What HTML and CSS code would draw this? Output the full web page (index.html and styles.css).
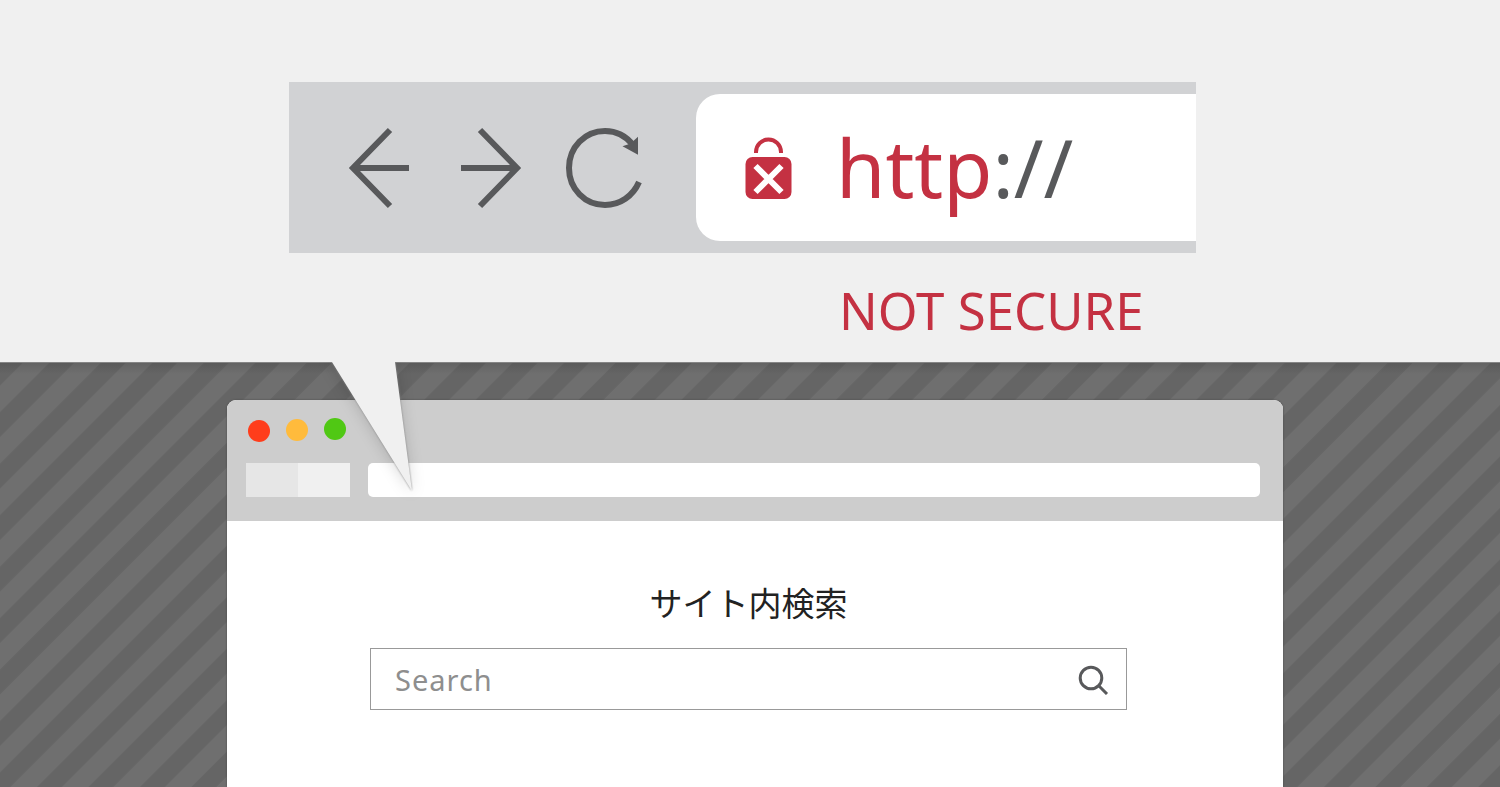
FILE: index.html
```html
<!DOCTYPE html>
<html lang="ja">
<head>
<meta charset="utf-8">
<meta name="viewport" content="width=device-width, initial-scale=1">
<title>サイト内検索</title>
<link rel="stylesheet" href="styles.css">
</head>
<body>
<header class="notice">
  <div class="closeup">
    <nav class="closeup-nav" aria-label="Browser">
      <button class="nav-button" type="button" aria-label="Back">
        <svg width="62" height="82" viewBox="0 0 62 82"><path d="M42 3 5 41l37 38M5 41h56"/></svg>
      </button>
      <button class="nav-button" type="button" aria-label="Forward">
        <svg width="62" height="82" viewBox="0 0 62 82"><path d="M20 3l37 38-37 38M57 41H1"/></svg>
      </button>
      <button class="nav-button" type="button" aria-label="Reload">
        <svg width="78" height="82" viewBox="0 0 78 82"><path d="M69 18C62 9 52 4 41 4 21 4 5 20 5 41s16 37 36 37c15 0 28-9 34-23"/><path class="tip" d="M73 12v14L61 19.500l6-2z"/></svg>
      </button>
    </nav>
    <div class="address">
      <svg class="lock" width="48" height="64" viewBox="0 0 48 64" aria-hidden="true">
        <path class="shackle" d="M12 17v-1a12.500 12.500 0 0 1 25 0v1"/>
        <rect class="lock-body" x="1.500" y="21" width="46" height="42" rx="7"/>
        <path class="cross" d="M11.500 30l26 26M37.500 30l-26 26"/>
      </svg>
      <span class="scheme">http<span class="slashes">://</span></span>
    </div>
  </div>
  <div class="warning-row"><p class="warning">NOT SECURE</p></div>
</header>
<main class="stage">
  <svg class="stripes" aria-hidden="true">
    <defs>
      <pattern id="stripe" width="36.400" height="36.400" patternUnits="userSpaceOnUse" patternTransform="rotate(45)">
        <rect x="16.600" width="18.900" height="36.400" fill="#6f6f6f"/>
      </pattern>
    </defs>
    <rect width="100%" height="100%" fill="url(#stripe)"/>
  </svg>
  <section class="window">
    <div class="chrome">
      <svg class="lights" width="100" height="26" viewBox="0 0 100 26" aria-hidden="true">
        <circle cx="13" cy="14" r="11" fill="#ff3d1b"/>
        <circle cx="51" cy="13" r="11" fill="#ffbb3c"/>
        <circle cx="89" cy="12" r="11" fill="#50c814"/>
      </svg>
      <div class="bar">
        <div class="segments">
          <button class="segment" type="button" aria-label="Back"></button>
          <button class="segment segment-next" type="button" aria-label="Forward"></button>
        </div>
        <input class="url" type="text" aria-label="Address">
      </div>
    </div>
    <div class="page">
      <form class="search">
        <label class="search-title" for="q">サイト内検索</label>
        <div class="search-box">
          <input class="search-input" id="q" type="text" placeholder="Search">
          <button class="search-button" type="button" aria-label="Search">
            <svg width="32" height="32" viewBox="0 0 32 32"><circle cx="14" cy="15" r="10.800"/><path d="M21.500 22.500 30 31"/></svg>
          </button>
        </div>
      </form>
    </div>
    <svg class="pointer" width="110" height="140" viewBox="0 0 110 140" aria-hidden="true">
      <path d="M-1-3 1 0l80 129L64 0v-3z"/>
    </svg>
  </section>
</main>
</body>
</html>
```
FILE: styles.css
```css
* { box-sizing: border-box; }

body {
  margin: 0;
  min-height: 100vh;
  display: flex;
  flex-direction: column;
  font-family: "Noto Sans", "Noto Sans CJK JP", sans-serif;
  background: #656565;
}

button, input { margin: 0; padding: 0; border: 0; font: inherit; }
button { background: none; cursor: pointer; }
svg { display: block; }

.notice {
  padding: 82px 304px 22px 289px;
  background: #f0f0f0;
}

.closeup, .warning-row {
  display: grid;
  grid-template-columns: 407px 1fr;
}

.closeup {
  padding: 12px 0;
  background: #d1d2d4;
}

.closeup-nav {
  display: flex;
  align-items: center;
  gap: 50px;
  padding-left: 59px;
}

.nav-button:last-child { margin-left: -8px; }
.nav-button path { fill: none; stroke: #58595b; stroke-width: 6; }
.nav-button .tip { fill: #58595b; stroke-width: 2; }

.address {
  display: flex;
  align-items: center;
  gap: 44px;
  height: 147px;
  padding-left: 48px;
  border-radius: 24px 0 0 24px;
  background: #fff;
}

.shackle { fill: none; stroke: #c43142; stroke-width: 4; }
.lock-body { fill: #c43142; }
.cross { fill: none; stroke: #fff; stroke-width: 6; }

.scheme { padding-bottom: 2px; font-size: 80px; line-height: 100px; color: #c43142; }
.slashes { color: #58595b; }

.warning {
  grid-column: 2;
  margin: 27px 0 0;
  padding-left: 143px;
  font-size: 51px;
  line-height: 60px;
  white-space: nowrap;
  color: #c43142;
}

.stage {
  position: relative;
  flex: 1;
  display: flex;
  padding: 38px 217px 0 227px;
  background: linear-gradient(rgba(0, 0, 0, .12), transparent 12px);
  box-shadow: inset 0 1px 0 #858585;
}

.stripes {
  position: absolute;
  inset: 0;
  z-index: -1;
  width: 100%;
  height: 100%;
}

.window {
  position: relative;
  flex: 1;
  border-radius: 9px 9px 0 0;
  background: #fff;
  box-shadow: 0 0 2px #444;
}

.chrome {
  padding: 17px 23px 24px 19px;
  border-radius: 9px 9px 0 0;
  background: #cdcdcd;
}

.bar { display: flex; gap: 18px; margin-top: 20px; }
.segments { display: flex; }
.segment { width: 52px; height: 34px; background: #e6e6e6; }
.segment-next { background: #f0f0f0; }

.url {
  flex: 1;
  min-width: 0;
  height: 34px;
  padding: 0 12px;
  border-radius: 5px;
  background: #fff;
}

.page { padding: 57px 156px 77px 143px; }
.search { display: flex; flex-direction: column; }

.search-title {
  margin-bottom: 22px;
  font-family: "Noto Sans CJK JP", sans-serif;
  font-size: 33px;
  font-weight: 400;
  line-height: 48px;
  text-align: center;
  color: #222;
}

.search-box {
  display: flex;
  align-items: center;
  height: 62px;
  padding: 0 17px 0 24px;
  border: 1px solid #999;
}

.search-input {
  flex: 1;
  min-width: 0;
  height: 48px;
  font-size: 29px;
  letter-spacing: 1px;
  background: none;
  color: #555;
}

.search-input::placeholder { color: #8e8e8e; opacity: 1; }
.search-button svg { fill: none; stroke: #58595b; stroke-width: 3; }

.pointer {
  position: absolute;
  top: -38px;
  left: 104px;
  overflow: visible;
  fill: #f0f0f0;
  pointer-events: none;
  clip-path: inset(0 -20px -20px);
  filter: drop-shadow(0 0 1px #888) drop-shadow(0 2px 7px rgba(0, 0, 0, .15));
}
```
